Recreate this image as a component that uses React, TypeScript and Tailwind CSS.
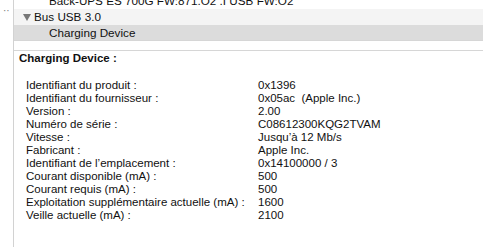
const rows: [string, string][] = [
  ["Identifiant du produit :", "0x1396"],
  ["Identifiant du fournisseur :", "0x05ac  (Apple Inc.)"],
  ["Version :", "2.00"],
  ["Numéro de série :", "C08612300KQG2TVAM"],
  ["Vitesse :", "Jusqu’à 12 Mb/s"],
  ["Fabricant :", "Apple Inc."],
  ["Identifiant de l’emplacement :", "0x14100000 / 3"],
  ["Courant disponible (mA) :", "500"],
  ["Courant requis (mA) :", "500"],
  ["Exploitation supplémentaire actuelle (mA) :", "1600"],
  ["Veille actuelle (mA) :", "2100"],
];

export default function App() {
  return (
    <div className="flex w-[483px] h-[247px] overflow-hidden bg-white text-[#111] font-['Liberation_Sans',Arial,sans-serif]">
      <div className="w-[14px] shrink-0 border-r border-[#d2d2d2]">
        <div className="mt-[6px] pl-[3px] text-[10px] leading-[10px] text-[#777]">··</div>
      </div>
      <div className="flex-1 flex flex-col min-w-0">
        <div className="h-[41px] overflow-hidden border-b border-[#d6d6d6] text-[11.7px]">
          <div className="-mt-[7px] h-[16px] leading-[16px] pl-[35px] whitespace-nowrap">
            Back-UPS ES 700G FW:871.O2 .I USB FW:O2
          </div>
          <div className="h-[16px] bg-[#f4f4f4] flex items-center pl-[9px] gap-[3px]">
            <svg width="8" height="7" viewBox="0 0 8 7">
              <path d="M0 0 H8 L4 7 Z" fill="#777" />
            </svg>
            <span className="leading-[16px]">Bus USB 3.0</span>
          </div>
          <div className="h-[15px] bg-[#dcdcdc] leading-[15px] pl-[35px]">Charging Device</div>
        </div>
        <div className="h-[10px] border-b border-[#d6d6d6]" />
        <div className="pl-[5px] text-[11.5px]">
          <div className="font-bold leading-[13px] mt-[1px]">Charging Device :</div>
          <div className="mt-[14px] pl-[7px] grid grid-cols-[232px_1fr] leading-[13px] whitespace-pre">
            {rows.map(([k, v]) => (
              <div key={k} className="contents">
                <div>{k}</div>
                <div>{v}</div>
              </div>
            ))}
          </div>
        </div>
      </div>
    </div>
  );
}
